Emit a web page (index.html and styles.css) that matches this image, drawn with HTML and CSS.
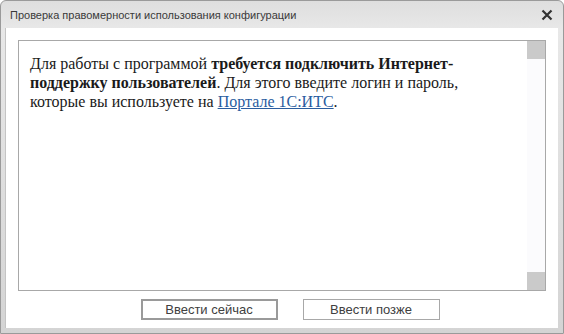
FILE: index.html
```html
<!DOCTYPE html>
<html lang="ru">
<head>
	<meta charset="UTF-8">
	<title>Проверка правомерности использования конфигурации</title>
	<link rel="stylesheet" href="styles.css">
</head>
<body>
	<div class="window">
		<div class="titlebar">
			<span class="title">Проверка правомерности использования конфигурации</span>
			<span class="close">
				<svg width="12" height="12" viewBox="0 0 12 12"><path d="M1.5 1.5L10.5 10.5M10.5 1.5L1.5 10.5" stroke="#333" stroke-width="2.2" fill="none"/></svg>
			</span>
		</div>
		<div class="client">
			<div class="content">
				<p class="text">
					Для работы с программой <b>требуется подключить Интернет-</b><br><b>поддержку пользователей</b>. Для этого введите логин и пароль,<br>которые вы используете на <a href="javascript:;">Портале 1С:ИТС</a>.
				</p>
				<div class="scroll">
					<div class="thumb"></div>
					<div class="thumb"></div>
				</div>
			</div>
			<div class="buttons">
				<a href="javascript:;" class="btn default">Ввести сейчас</a>
				<a href="javascript:;" class="btn">Ввести позже</a>
			</div>
		</div>
	</div>
</body>
</html>
```

FILE: styles.css
```css
html,body{margin:0;padding:0;background:#fff;}
.window{width:564px;height:334px;box-sizing:border-box;display:flex;flex-direction:column;background:linear-gradient(#dedede,#e8e8e8 28px,#d4d4d4);border:1px solid #9a9a9a;border-radius:6px 6px 0 0;padding:0 5px 5px 4px;}
.titlebar{height:27px;display:flex;align-items:center;justify-content:space-between;padding:0 4px 0 5px;font-family:"Liberation Sans",Arial,sans-serif;font-size:11px;color:#3a3a3a;}
.close{display:flex;width:14px;height:14px;align-items:center;justify-content:center;}
.client{flex:1;background:#fff;padding:12px 12px 0 12px;border-left:1px solid #c4c4c4;}
.content{height:251px;box-sizing:border-box;border:1px solid #a8a8a8;display:flex;}
.text{flex:1;margin:0;padding:13px 10px 0 11px;font-family:"Liberation Serif","Times New Roman",serif;font-size:16px;line-height:19px;color:#1a1a1a;white-space:nowrap;}
.text a{color:#2a5d9f;text-decoration:underline;}
.scroll{width:18px;background:#fbfbfd;display:flex;flex-direction:column;justify-content:space-between;}
.thumb{height:18px;background:#cacaca;}
.buttons{display:flex;justify-content:center;gap:25px;margin-top:8px;padding-left:16px;}
.btn{width:137px;height:21px;box-sizing:border-box;border:1px solid #a8a8a8;display:flex;align-items:center;justify-content:center;font-family:"Liberation Sans",Arial,sans-serif;font-size:13px;color:#404040;text-decoration:none;background:#fff;}
.btn.default{border:2px solid #9a9a9a;}
```
